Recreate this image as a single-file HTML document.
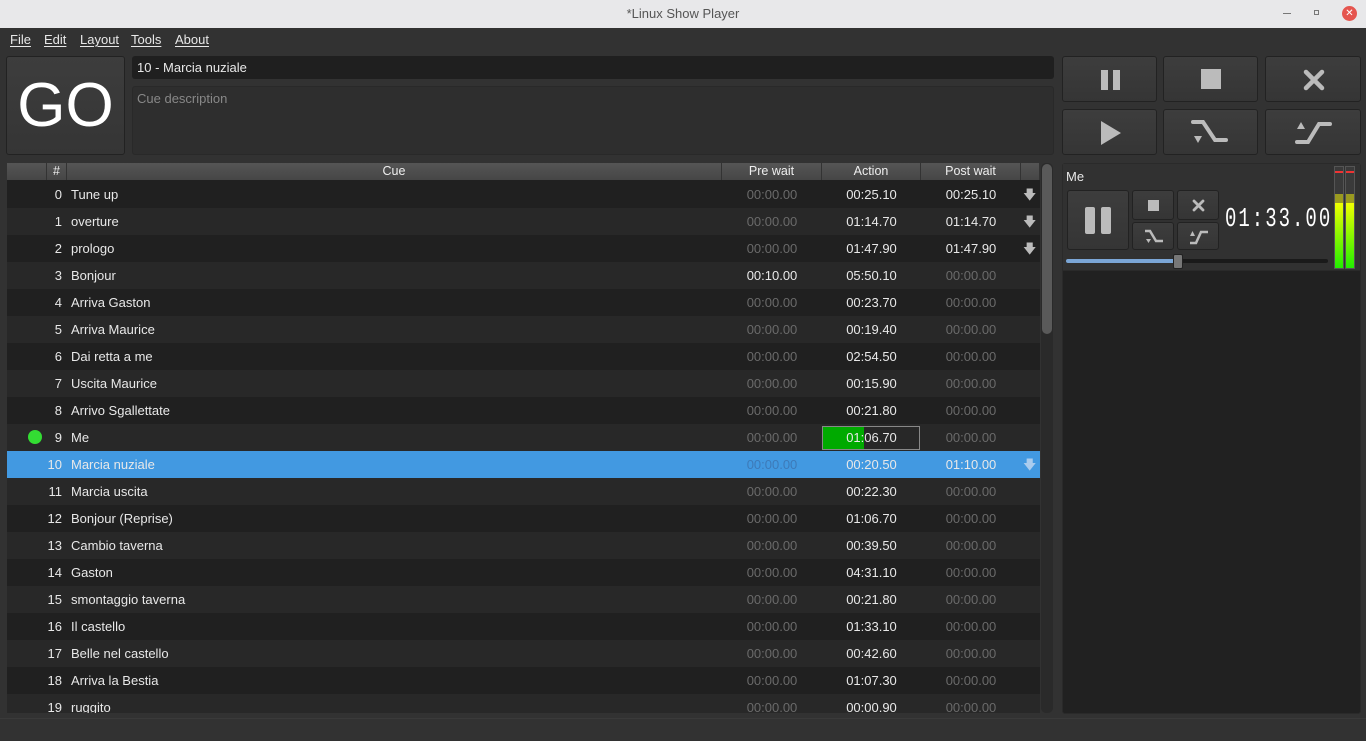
<!DOCTYPE html>
<html><head><meta charset="utf-8"><style>
*{margin:0;padding:0;box-sizing:border-box}
body{width:1366px;height:741px;background:#323232;font-family:"Liberation Sans",sans-serif;font-size:13px;color:#e8e8e8;position:relative;overflow:hidden}
.a{position:absolute}
.title{left:0;top:0;width:1366px;height:28px;background:#e8e8ea;color:#555;text-align:center;line-height:28px;font-size:13px}
.menu span{position:absolute;top:32px;font-size:13px;text-decoration:underline;text-decoration-thickness:1px;text-underline-offset:2px}
.btn{background:linear-gradient(#3d3d3d,#353535);border:1px solid #222;border-radius:3px}
.tbl{left:7px;top:163px;width:1033px;height:550px;overflow:hidden;background:#202020}
.hd{position:absolute;top:0;height:17px;background:linear-gradient(#555,#464646);border-right:1px solid #333;text-align:center;line-height:17px;font-size:12.5px;color:#eee}
.row{position:absolute;left:0;width:1033px;height:27px;line-height:27px}
.row div{position:absolute;top:0}
.n{left:40px;width:15px;text-align:right}
.c{left:64px}
.p{left:715px;width:100px;text-align:center}
.ac{left:815px;width:99px;text-align:center}
.pw{left:914px;width:100px;text-align:center}
.d{color:#6a6a6a}
.ar{left:1016px;width:14px;color:#bbb}
</style></head><body>
<div class="a title">*Linux Show Player</div>
<div class="a" style="left:1283px;top:13px;width:8px;height:1px;background:#777"></div>
<div class="a" style="left:1314px;top:10px;width:5px;height:5px;border:1px solid #777"></div>
<div class="a" style="left:1342px;top:6px;width:15px;height:15px;border-radius:50%;background:#e5554f;color:#fff;font-size:10px;line-height:15px;text-align:center">✕</div>
<div class="menu"><span style="left:10px">File</span><span style="left:44px">Edit</span><span style="left:80px">Layout</span><span style="left:131px">Tools</span><span style="left:175px">About</span></div>
<div class="a btn" style="left:6px;top:56px;width:119px;height:99px;color:#fff;font-size:62px;text-align:center;line-height:97px;font-family:'Liberation Sans',sans-serif">GO</div>
<div class="a" style="left:132px;top:56px;width:922px;height:23px;background:#1f1f1f;border-radius:3px;padding-left:5px;line-height:23px;font-size:13px">10 - Marcia nuziale</div>
<div class="a" style="left:132px;top:86px;width:922px;height:69px;background:#2e2e2e;border:1px solid #292929;border-radius:3px;padding:4px;color:#888;font-size:13px">Cue description</div>

<div class="a btn" style="left:1062px;top:56px;width:95px;height:46px"><div class="a" style="left:38px;top:13px;width:7px;height:20px;background:#bbb"></div><div class="a" style="left:50px;top:13px;width:7px;height:20px;background:#bbb"></div></div>
<div class="a btn" style="left:1163px;top:56px;width:95px;height:46px"><div class="a" style="left:37px;top:12px;width:20px;height:20px;background:#bbb"></div></div>
<div class="a btn" style="left:1265px;top:56px;width:96px;height:46px"><svg class="a" style="left:37px;top:12px" width="22" height="22"><path d="M3 3L19 19M19 3L3 19" stroke="#bbb" stroke-width="4.5" stroke-linecap="round"/></svg></div>
<div class="a btn" style="left:1062px;top:109px;width:95px;height:46px"><svg class="a" style="left:36px;top:10px" width="24" height="26"><path d="M2 1L22 13L2 25Z" fill="#bbb"/></svg></div>
<div class="a btn" style="left:1163px;top:109px;width:95px;height:46px"><svg class="a" style="left:27px;top:8px" width="40" height="30"><path d="M2 4H12L24 22H35" stroke="#bbb" stroke-width="4" fill="none" stroke-linecap="round"/><path d="M3 18H11L7 25Z" fill="#bbb"/></svg></div>
<div class="a btn" style="left:1265px;top:109px;width:96px;height:46px"><svg class="a" style="left:28px;top:8px" width="40" height="30"><path d="M3 24H14L25 6H36" stroke="#bbb" stroke-width="4" fill="none" stroke-linecap="round"/><path d="M3 11H11L7 4Z" fill="#bbb"/></svg></div>

<div class="a" style="left:1062px;top:163px;width:299px;height:551px;background:#212121;border:1px solid #2a2a2a;border-radius:3px"></div>
<div class="a" style="left:1063px;top:164px;width:297px;height:107px;background:#313131;border-bottom:1px solid #2a2a2a"></div>
<div class="a" style="left:1066px;top:169px;font-size:13px">Me</div>
<div class="a btn" style="left:1067px;top:190px;width:62px;height:60px"><div class="a" style="left:17px;top:16px;width:10px;height:27px;background:#bbb;border-radius:2px"></div><div class="a" style="left:33px;top:16px;width:10px;height:27px;background:#bbb;border-radius:2px"></div></div>
<div class="a btn" style="left:1132px;top:190px;width:42px;height:30px"><div class="a" style="left:15px;top:9px;width:11px;height:11px;background:#bbb"></div></div>
<div class="a btn" style="left:1177px;top:190px;width:42px;height:30px"><svg class="a" style="left:14px;top:8px" width="13" height="13"><path d="M2 2L11 11M11 2L2 11" stroke="#bbb" stroke-width="2.8" stroke-linecap="round"/></svg></div>
<div class="a btn" style="left:1132px;top:222px;width:42px;height:28px"><svg class="a" style="left:11px;top:5px" width="22" height="18"><path d="M1 3H6L12 13H19" stroke="#bbb" stroke-width="2.5" fill="none"/><path d="M2 11H7L4.5 15Z" fill="#bbb"/></svg></div>
<div class="a btn" style="left:1177px;top:222px;width:42px;height:28px"><svg class="a" style="left:10px;top:5px" width="22" height="18"><path d="M2 15H8L13 4H20" stroke="#bbb" stroke-width="2.5" fill="none"/><path d="M2 8H7L4.5 3Z" fill="#bbb"/></svg></div>
<div class="a" style="left:1225px;top:205px;font-family:'Liberation Mono',monospace;font-size:19px;line-height:20px;color:#fff;letter-spacing:2px;white-space:nowrap;transform:scaleY(1.4);transform-origin:0 0">01:33.00</div>
<div class="a" style="left:1066px;top:259px;width:262px;height:4px;background:#1a1a1a;border-radius:2px"></div>
<div class="a" style="left:1066px;top:259px;width:112px;height:4px;background:#7ba6d6;border-radius:2px"></div>
<div class="a" style="left:1173px;top:254px;width:10px;height:15px;background:#777;border:1px solid #222;border-radius:2px"></div>
<div class="a" style="left:1334px;top:166px;width:10px;height:103px;background:#3a3a3a;border:1px solid #555"></div>
<div class="a" style="left:1345px;top:166px;width:10px;height:103px;background:#3a3a3a;border:1px solid #555"></div>
<div class="a" style="left:1335px;top:171px;width:8px;height:2px;background:#e33"></div>
<div class="a" style="left:1346px;top:171px;width:8px;height:2px;background:#e33"></div>
<div class="a" style="left:1335px;top:194px;width:8px;height:74px;background:linear-gradient(#9a9a20 0,#9a9a20 9px,#f0ff00 9px,#22ee00)"></div>
<div class="a" style="left:1346px;top:194px;width:8px;height:74px;background:linear-gradient(#9a9a20 0,#9a9a20 9px,#f0ff00 9px,#22ee00)"></div>

<div class="a tbl">
<div class="hd" style="left:0;width:40px"></div>
<div class="hd" style="left:40px;width:20px">#</div>
<div class="hd" style="left:60px;width:655px">Cue</div>
<div class="hd" style="left:715px;width:100px">Pre wait</div>
<div class="hd" style="left:815px;width:99px">Action</div>
<div class="hd" style="left:914px;width:100px">Post wait</div>
<div class="hd" style="left:1014px;width:19px"></div>
</div>
<div class="a" style="left:1041px;top:163px;width:12px;height:550px;background:#2a2a2a;border-radius:5px"></div>
<div class="a" style="left:1042px;top:164px;width:10px;height:170px;background:#5a5a5a;border-radius:5px"></div>
<div class="a" style="left:0;top:718px;width:1366px;height:1px;background:#3a3a3a"></div>

<div class="a" style="left:7px;top:181px;width:1033px">
<div class="row" style="top:0;background:#202020"><div class="n">0</div><div class="c">Tune up</div><div class="p d">00:00.00</div><div class="ac">00:25.10</div><div class="pw">00:25.10</div><div class="ar">🡇</div></div>
<div class="row" style="top:27px;background:#282828"><div class="n">1</div><div class="c">overture</div><div class="p d">00:00.00</div><div class="ac">01:14.70</div><div class="pw">01:14.70</div><div class="ar">🡇</div></div>
<div class="row" style="top:54px;background:#202020"><div class="n">2</div><div class="c">prologo</div><div class="p d">00:00.00</div><div class="ac">01:47.90</div><div class="pw">01:47.90</div><div class="ar">🡇</div></div>
<div class="row" style="top:81px;background:#282828"><div class="n">3</div><div class="c">Bonjour</div><div class="p">00:10.00</div><div class="ac">05:50.10</div><div class="pw d">00:00.00</div></div>
<div class="row" style="top:108px;background:#202020"><div class="n">4</div><div class="c">Arriva Gaston</div><div class="p d">00:00.00</div><div class="ac">00:23.70</div><div class="pw d">00:00.00</div></div>
<div class="row" style="top:135px;background:#282828"><div class="n">5</div><div class="c">Arriva Maurice</div><div class="p d">00:00.00</div><div class="ac">00:19.40</div><div class="pw d">00:00.00</div></div>
<div class="row" style="top:162px;background:#202020"><div class="n">6</div><div class="c">Dai retta a me</div><div class="p d">00:00.00</div><div class="ac">02:54.50</div><div class="pw d">00:00.00</div></div>
<div class="row" style="top:189px;background:#282828"><div class="n">7</div><div class="c">Uscita Maurice</div><div class="p d">00:00.00</div><div class="ac">00:15.90</div><div class="pw d">00:00.00</div></div>
<div class="row" style="top:216px;background:#202020"><div class="n">8</div><div class="c">Arrivo Sgallettate</div><div class="p d">00:00.00</div><div class="ac">00:21.80</div><div class="pw d">00:00.00</div></div>
<div class="row" style="top:243px;background:#282828"><div style="left:21px;top:6px;width:14px;height:14px;border-radius:50%;background:#3d3"></div><div class="n">9</div><div class="c">Me</div><div class="p d">00:00.00</div><div style="left:815px;top:2px;width:98px;height:24px;border:1px solid #888;background:linear-gradient(90deg,#0a0 0,#0a0 41px,transparent 41px)"></div><div class="ac">01:06.70</div><div class="pw d">00:00.00</div></div>
<div class="row" style="top:270px;background:#4299e1"><div class="n">10</div><div class="c">Marcia nuziale</div><div class="p" style="color:#3d7ab8">00:00.00</div><div class="ac">00:20.50</div><div class="pw">01:10.00</div><div class="ar" style="color:#aaccee">🡇</div></div>
<div class="row" style="top:297px;background:#282828"><div class="n">11</div><div class="c">Marcia uscita</div><div class="p d">00:00.00</div><div class="ac">00:22.30</div><div class="pw d">00:00.00</div></div>
<div class="row" style="top:324px;background:#202020"><div class="n">12</div><div class="c">Bonjour (Reprise)</div><div class="p d">00:00.00</div><div class="ac">01:06.70</div><div class="pw d">00:00.00</div></div>
<div class="row" style="top:351px;background:#282828"><div class="n">13</div><div class="c">Cambio taverna</div><div class="p d">00:00.00</div><div class="ac">00:39.50</div><div class="pw d">00:00.00</div></div>
<div class="row" style="top:378px;background:#202020"><div class="n">14</div><div class="c">Gaston</div><div class="p d">00:00.00</div><div class="ac">04:31.10</div><div class="pw d">00:00.00</div></div>
<div class="row" style="top:405px;background:#282828"><div class="n">15</div><div class="c">smontaggio taverna</div><div class="p d">00:00.00</div><div class="ac">00:21.80</div><div class="pw d">00:00.00</div></div>
<div class="row" style="top:432px;background:#202020"><div class="n">16</div><div class="c">Il castello</div><div class="p d">00:00.00</div><div class="ac">01:33.10</div><div class="pw d">00:00.00</div></div>
<div class="row" style="top:459px;background:#282828"><div class="n">17</div><div class="c">Belle nel castello</div><div class="p d">00:00.00</div><div class="ac">00:42.60</div><div class="pw d">00:00.00</div></div>
<div class="row" style="top:486px;background:#202020"><div class="n">18</div><div class="c">Arriva la Bestia</div><div class="p d">00:00.00</div><div class="ac">01:07.30</div><div class="pw d">00:00.00</div></div>
<div class="row" style="top:513px;height:19px;overflow:hidden;background:#282828"><div class="n">19</div><div class="c">ruggito</div><div class="p d">00:00.00</div><div class="ac">00:00.90</div><div class="pw d">00:00.00</div></div>
</div>
</body></html>
